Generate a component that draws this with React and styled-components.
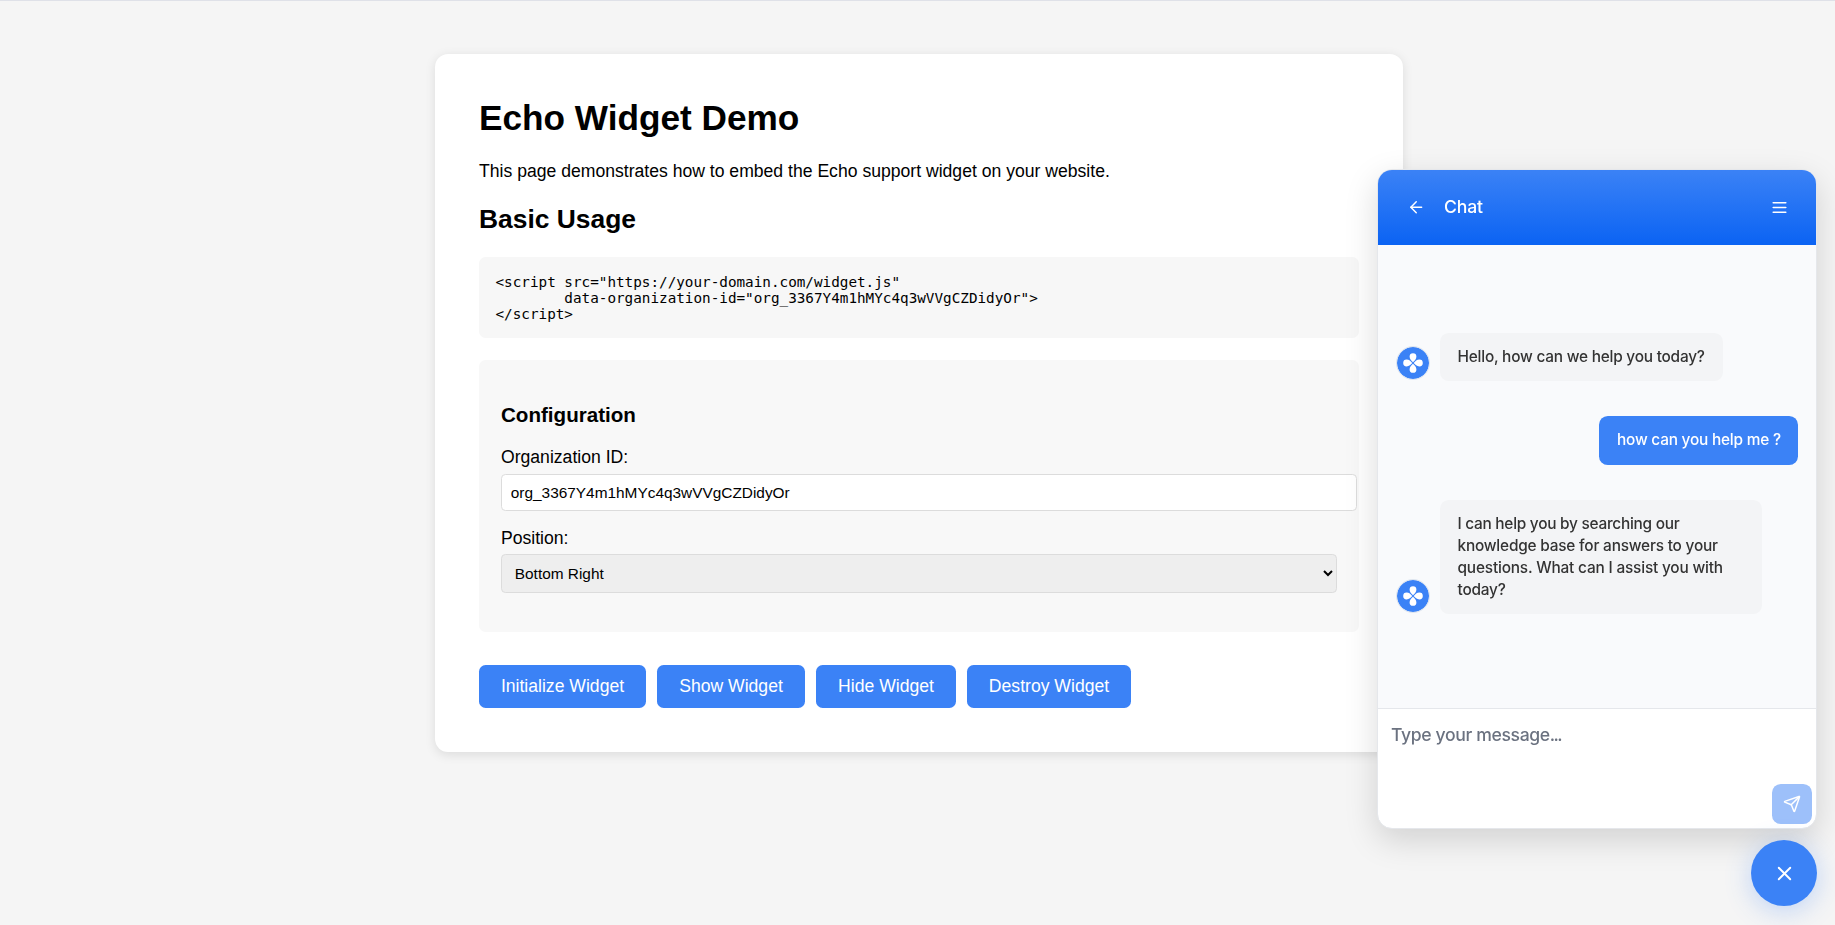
import React from "react";
import styled, { createGlobalStyle, css } from "styled-components";
import { ArrowLeft, X, Send } from "lucide-react";

const Global = createGlobalStyle`
  body {
    margin: 0;
    background: #f5f5f5;
    color: #000;
    font: 17.6px "Liberation Sans", Arial, sans-serif;
  }
`;

const Page = styled.div`
  box-sizing: border-box;
  height: 925px;
  overflow: hidden;
  border-top: 1px solid #dfe1e8;
  padding: 53px 0 0 3px;
`;

const Card = styled.main`
  box-sizing: border-box;
  width: 968px;
  height: 698px;
  margin: 0 auto;
  padding: 44px;
  background: #fff;
  border-radius: 13.2px;
  box-shadow: 0 2.2px 11px rgba(0, 0, 0, 0.1);
`;

const Title = styled.h1`
  margin: 0 0 23px;
  font-size: 35.2px;
  line-height: 40px;
`;

const Intro = styled.p`
  margin: 0 0 22px;
  line-height: 20px;
`;

const Heading = styled.h2`
  margin: 0 0 22px;
  font-size: 26.4px;
  line-height: 32px;
`;

const Code = styled.pre`
  margin: 0 0 22px;
  padding: 17px 16.5px 16px;
  background: #f7f7f7;
  border-radius: 6.6px;
  font: 14.3px/16px "DejaVu Sans Mono", monospace;
`;

const Config = styled.section`
  box-sizing: border-box;
  height: 272px;
  padding: 43px 22px 0;
  background: #f8f8f8;
  border-radius: 6.6px;
`;

const ConfigTitle = styled.h3`
  margin: 0 0 20px;
  font-size: 20.59px;
  line-height: 24px;
`;

const Label = styled.label`
  display: block;
  line-height: 20px;
  margin-bottom: ${(p) => p.$gap}px;
`;

const control = css`
  display: block;
  box-sizing: border-box;
  margin: 0;
  border: 1px solid #dcdcdc;
  border-radius: 4.4px;
  color: #000;
  font: 15.4px "Liberation Sans", Arial, sans-serif;
`;

const Input = styled.input`
  ${control}
  width: 856px;
  height: 37px;
  padding: 0 8.8px;
  margin-bottom: 17px;
  background: #fff;
`;

const Select = styled.select`
  ${control}
  width: 836px;
  height: 39px;
  padding: 0 8.8px;
  background: #eee;
`;

const Actions = styled.div`
  display: flex;
  gap: 11px;
  margin-top: 33px;
`;

const ActionButton = styled.button`
  box-sizing: border-box;
  width: ${(p) => p.$width}px;
  height: 43px;
  padding: 0;
  border: 0;
  border-radius: 6.6px;
  background: #3b82f6;
  color: #fff;
  font: 17.6px "Liberation Sans", Arial, sans-serif;
  white-space: nowrap;
`;

const Widget = styled.aside`
  position: fixed;
  right: 18px;
  bottom: 96px;
  box-sizing: border-box;
  width: 440px;
  height: 660px;
  display: flex;
  flex-direction: column;
  overflow: hidden;
  border: 1px solid #e5e7eb;
  border-radius: 15px;
  background: #fff;
  background-clip: padding-box;
  box-shadow: 0 11px 33px rgba(0, 0, 0, 0.15);
  font-family: Inter, sans-serif;
`;

const Header = styled.header`
  display: flex;
  align-items: center;
  flex: 0 0 75px;
  box-sizing: border-box;
  padding: 0 27px 0 29px;
  color: #fff;
  background: linear-gradient(180deg, #3b82f6, #0b63f3);

  svg {
    display: block;
  }
`;

const HeaderTitle = styled.span`
  flex: 1;
  margin: 0 0 2px 18.5px;
  font-size: 17.6px;
  font-weight: 500;
  letter-spacing: -0.15px;
  line-height: 26px;
`;

const Messages = styled.div`
  flex: 1;
  padding: 88px 18px 0;
  background: #f9fafc;
`;

const Row = styled.div`
  display: flex;
  align-items: flex-end;
  justify-content: ${(p) => (p.$user ? "flex-end" : "flex-start")};
  gap: 10px;
  margin-bottom: 35px;
`;

const Bubble = styled.div`
  box-sizing: border-box;
  width: ${(p) => p.$width}px;
  padding: ${(p) => (p.$user ? "13px 18px 14px" : "13px 17.5px")};
  border-radius: 8.8px;
  background: ${(p) => (p.$user ? "#3b82f6" : "#f3f4f6")};
  color: ${(p) => (p.$user ? "#fff" : "#333")};
  font-size: 15.4px;
  font-weight: ${(p) => (p.$user ? 500 : 450)};
  line-height: 22px;
  white-space: nowrap;
`;

const Line = styled.span`
  display: block;
  letter-spacing: ${(p) => p.$track}px;
`;

const Avatar = styled.div`
  box-sizing: border-box;
  width: 34px;
  height: 34px;
  margin-bottom: 0.6px;
  border: 1px solid #dde4ef;
  border-radius: 50%;
  background: #3b82f6;
  background-clip: padding-box;

  svg {
    display: block;
  }
`;

const Composer = styled.div`
  flex: 0 0 120px;
  box-sizing: border-box;
  display: flex;
  flex-direction: column;
  justify-content: space-between;
  padding: 13px 4px 4px 13px;
  border-top: 1px solid #e5e7eb;
`;

const Placeholder = styled.div`
  color: #6b7280;
  font-size: 17.6px;
  font-weight: 450;
  line-height: 26px;
  letter-spacing: -0.37px;
`;

const Ellipsis = styled.span`
  letter-spacing: -1.6px;
`;

const SendButton = styled.button`
  align-self: flex-end;
  display: grid;
  place-items: center;
  width: 40px;
  height: 40px;
  padding: 0;
  border: 0;
  border-radius: 8.8px;
  background: #9dc0fa;
  color: #fff;
`;

const Launcher = styled.button`
  position: fixed;
  right: 18px;
  bottom: 19px;
  display: grid;
  place-items: center;
  width: 66px;
  height: 66px;
  padding: 0;
  border: 0;
  border-radius: 50%;
  background: #3b82f6;
  color: #fff;
  box-shadow: 0 4.4px 26.4px rgba(59, 130, 246, 0.3);
`;

const PETAL = "M16 15.3C14.3 13.7 12.6 12.2 12.6 9.6A3.4 3.4 0 0 1 19.4 9.6C19.4 12.2 17.7 13.7 16 15.3Z";

function BotAvatar() {
  return (
    <Avatar>
      <svg width="32" height="32" viewBox="0 0 32 32" fill="#fff">
        {[0, 90, 180, 270].map((a) => (
          <path key={a} d={PETAL} transform={`rotate(${a} 16 16)`} />
        ))}
      </svg>
    </Avatar>
  );
}

function MenuIcon() {
  return (
    <svg
      width="19"
      height="19"
      viewBox="0 0 24 24"
      fill="none"
      stroke="currentColor"
      strokeWidth="1.9"
      strokeLinecap="round"
    >
      <path d="M4 6h16M4 12h16M4 18h16" />
    </svg>
  );
}

const snippet = `<script src="https://your-domain.com/widget.js"
        data-organization-id="org_3367Y4m1hMYc4q3wVVgCZDidyOr">
</script>`;

export default function App() {
  return (
    <>
      <Global />
      <Page>
        <Card>
          <Title>Echo Widget Demo</Title>
          <Intro>This page demonstrates how to embed the Echo support widget on your website.</Intro>
          <Heading>Basic Usage</Heading>
          <Code>{snippet}</Code>
          <Config>
            <ConfigTitle>Configuration</ConfigTitle>
            <Label $gap={7}>Organization ID:</Label>
            <Input defaultValue="org_3367Y4m1hMYc4q3wVVgCZDidyOr" />
            <Label $gap={6}>Position:</Label>
            <Select defaultValue="br">
              <option value="br">Bottom Right</option>
              <option value="bl">Bottom Left</option>
            </Select>
          </Config>
          <Actions>
            <ActionButton $width={167}>Initialize Widget</ActionButton>
            <ActionButton $width={148}>Show Widget</ActionButton>
            <ActionButton $width={140}>Hide Widget</ActionButton>
            <ActionButton $width={164}>Destroy Widget</ActionButton>
          </Actions>
        </Card>
      </Page>
      <Widget>
        <Header>
          <ArrowLeft size={18.5} strokeWidth={1.9} />
          <HeaderTitle>Chat</HeaderTitle>
          <MenuIcon />
        </Header>
        <Messages>
          <Row>
            <BotAvatar />
            <Bubble $width={283}>
              <Line $track={-0.22}>Hello, how can we help you today?</Line>
            </Bubble>
          </Row>
          <Row $user>
            <Bubble $user $width={199}>
              <Line $track={-0.21}>how can you help me ?</Line>
            </Bubble>
          </Row>
          <Row>
            <BotAvatar />
            <Bubble $width={322}>
              <Line $track={-0.26}>I can help you by searching our</Line>
              <Line $track={-0.2}>knowledge base for answers to your</Line>
              <Line $track={-0.18}>questions. What can I assist you with</Line>
              <Line $track={-0.2}>today?</Line>
            </Bubble>
          </Row>
        </Messages>
        <Composer>
          <Placeholder>
            Type your message<Ellipsis>...</Ellipsis>
          </Placeholder>
          <SendButton aria-label="Send">
            <Send size={18} strokeWidth={2} />
          </SendButton>
        </Composer>
      </Widget>
      <Launcher aria-label="Close">
        <X size={23} strokeWidth={2} />
      </Launcher>
    </>
  );
}
